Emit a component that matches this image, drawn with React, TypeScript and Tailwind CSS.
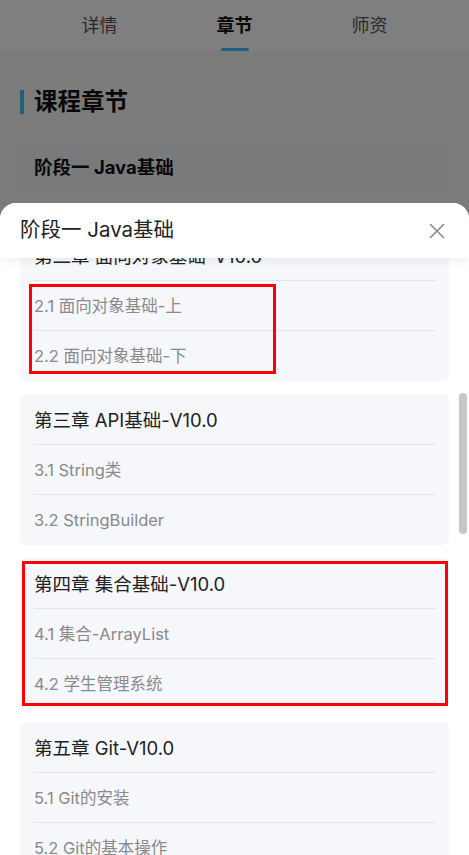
import React from 'react';

type Chapter = {
  title: string;
  lessons: string[];
};

const chapters: Chapter[] = [
  { title: '第二章 面向对象基础-V10.0', lessons: ['2.1 面向对象基础-上', '2.2 面向对象基础-下'] },
  { title: '第三章 API基础-V10.0', lessons: ['3.1 String类', '3.2 StringBuilder'] },
  { title: '第四章 集合基础-V10.0', lessons: ['4.1 集合-ArrayList', '4.2 学生管理系统'] },
  { title: '第五章 Git-V10.0', lessons: ['5.1 Git的安装', '5.2 Git的基本操作'] },
];

const font = { fontFamily: 'Inter, "Noto Sans CJK SC", sans-serif' };

function ChapterCard({ chapter }: { chapter: Chapter }) {
  return (
    <div className="rounded-md bg-[#f6f7fb] pl-[14px] pr-[13px]">
      <div className="flex h-[51px] items-center border-b border-[#e4e6ec] pt-[4px] text-[18.5px] text-[#222]">
        {chapter.title}
      </div>
      {chapter.lessons.map((lesson, i) => (
        <div
          key={lesson}
          className={`flex h-[50px] items-center pt-[1px] text-[16.5px] text-[#8a8a8a] ${
            i < chapter.lessons.length - 1 ? 'border-b border-[#e4e6ec]' : ''
          }`}
        >
          {lesson}
        </div>
      ))}
    </div>
  );
}

export default function App() {
  return (
    <div className="relative h-[855px] w-full overflow-hidden bg-[#f7f7f7]" style={font}>
      {/* page underneath */}
      <div className="flex h-[50px] items-center justify-center bg-white">
        <div className="flex w-[135px] justify-center text-[18px] text-[#555]">详情</div>
        <div className="relative flex w-[135px] justify-center">
          <span className="text-[18px] font-bold text-[#111]">章节</span>
          <span className="absolute bottom-[-12px] h-[3px] w-[28px] rounded-full bg-[#3ebeff]" />
        </div>
        <div className="flex w-[135px] justify-center text-[18px] text-[#555]">师资</div>
      </div>
      <div className="px-5 pt-[38px]">
        <div className="flex h-[28px] items-center gap-[10px]">
          <span className="h-[24px] w-[4px] bg-[#3ebeff]" />
          <span className="text-[23.5px] font-bold text-[#111]">课程章节</span>
        </div>
        <div className="mt-[24px] flex h-[55px] items-center rounded-md bg-[#f3f4f8] px-[14px]">
          <span className="text-[18.5px] font-bold text-[#111]">阶段一 Java基础</span>
        </div>
      </div>

      {/* mask */}
      <div className="absolute inset-0 bg-black/50" />

      {/* bottom sheet */}
      <div className="absolute inset-x-0 bottom-0 top-[203px] flex flex-col overflow-hidden rounded-t-[16px] bg-white">
        <div className="relative z-10 flex h-[55px] shrink-0 items-center justify-between bg-white pl-5 pr-[24px] shadow-[0_4px_8px_rgba(0,0,0,0.05)]">
          <span className="text-[20.5px] text-[#222]">阶段一 Java基础</span>
          <svg width="16" height="16" viewBox="0 0 16 16" fill="none" stroke="#8a8a8a" strokeWidth="1.6" strokeLinecap="round">
            <path d="M1.5 1.5L14.5 14.5M14.5 1.5L1.5 14.5" />
          </svg>
        </div>
        <div className="relative flex-1 overflow-hidden">
          <div className="-mt-[28px] flex flex-col gap-[13px] pl-5 pr-5">
            {chapters.map((c) => (
              <ChapterCard key={c.title} chapter={c} />
            ))}
          </div>
          {/* scrollbar thumb */}
          <div className="absolute right-[2px] top-[135px] h-[141px] w-[8px] rounded-full bg-[#c6c6c6]" />
        </div>
      </div>

      {/* annotation boxes */}
      <div className="pointer-events-none absolute left-[29px] top-[284px] h-[90px] w-[247px] border-[3px] border-[#ff0000]" />
      <div className="pointer-events-none absolute left-[22px] top-[561px] h-[145px] w-[426px] border-[3px] border-[#ff0000]" />
    </div>
  );
}
